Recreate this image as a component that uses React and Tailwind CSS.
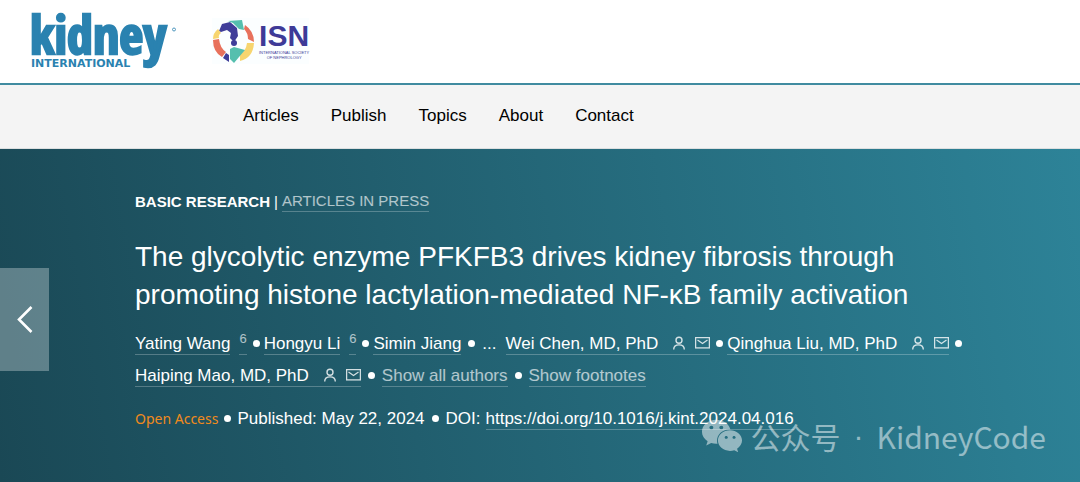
import { FaWeixin } from "react-icons/fa";

const navItems = ["Articles", "Publish", "Topics", "About", "Contact"];

function KidneyLogo() {
  return (
    <a href="#home" aria-label="Kidney International" className="block w-[150px] text-[#2a82b0]">
      <svg viewBox="0 0 150 62" className="block h-[62px] w-[150px] overflow-visible" fill="currentColor">
        <text x="-2" y="43" fontFamily="'Open Sans Condensed', 'Noto Sans Condensed', 'Roboto Condensed', 'Liberation Sans', sans-serif" fontSize="52" fontWeight="700" stroke="currentColor" strokeWidth="2.4">
          kidney
        </text>
        <text x="-1" y="56" fontFamily="'DejaVu Sans', sans-serif" fontSize="11" fontWeight="700">
          INTERNATIONAL
        </text>
        <circle cx="142" cy="18.500" r="1.500" fill="none" stroke="currentColor" strokeWidth="0.8" />
      </svg>
    </a>
  );
}

function IsnLogo() {
  return (
    <a href="#isn" aria-label="International Society of Nephrology" className="flex items-center gap-[3px] bg-[#fbfeff] text-[#3d3a97]">
      <svg viewBox="0 0 44 46" className="h-[46px] w-[44px]">
        <path d="M7 13 L10 6 L18 4 L25 10 L26 18 L22 24 L18 20 L19 15 L15 12 L9 14Z" fill="#3f3d99" />
        <path d="M16 3 L30 2 L32 12 L27 11 L21 5Z" fill="#55bfae" />
        <path d="M33 7 Q42 13 42 24 L36 21 Q36 15 32 11Z" fill="#e8715c" />
        <path d="M42 25 Q41 40 28 43 L28 36 Q34 33 35 25Z" fill="#f7d56f" />
        <path d="M18 31 L22 29 L33 32 L27 39 L22 45 L18 41Z" fill="#55bfae" />
        <path d="M6 11 L9 15 Q6 17 7 20 L1 21 Q1 15 6 11Z" fill="#f7d56f" />
        <path d="M1 22 L7 21 Q8 30 14 34 L10 39 Q1 34 1 22Z" fill="#e8715c" />
        <path d="M11 40 L14 35 L17 37 L17 44Z" fill="#3f3d99" />
        <circle cx="22" cy="25" r="3" fill="#3f3d99" />
      </svg>
      <span className="flex flex-col items-center">
        <span className="font-['Liberation_Sans'] text-[30px] leading-[28px] font-bold">ISN</span>
        <span className="text-center font-['Liberation_Sans'] text-[4px] leading-[5px]">
          INTERNATIONAL SOCIETY
          <br />
          OF NEPHROLOGY
        </span>
      </span>
    </a>
  );
}

function Dot({ className = "" }) {
  return <span className={"h-[7px] w-[7px] shrink-0 rounded-full bg-white " + className} />;
}

function PersonIcon() {
  return (
    <svg viewBox="0 0 14 14" className="h-[14px] w-[14px]" fill="none" stroke="currentColor" strokeWidth="1.400">
      <circle cx="7" cy="4.200" r="3" />
      <path d="M1.700 13.500 C1.700 10.200 4 8.900 7 8.900 S12.300 10.200 12.300 13.500" />
    </svg>
  );
}

function MailIcon() {
  return (
    <svg viewBox="0 0 15 12" className="h-[12px] w-[15px]" fill="none" stroke="currentColor" strokeWidth="1.300">
      <rect x="0.600" y="0.600" width="13.800" height="10.300" />
      <path d="M2.500 3 L7.500 6.500 L12.500 3" />
    </svg>
  );
}

const linkBase = "flex h-[23px] items-center border-b border-white/25 whitespace-nowrap ";

function Author({ name, note, contact = false }) {
  return (
    <>
      <a href="#author" className={linkBase}>
        {name}
        {contact && (
          <span className="ml-[14px] flex items-center gap-[9px] text-white/80">
            <PersonIcon />
            <MailIcon />
          </span>
        )}
      </a>
      {note && (
        <a href="#note" className={linkBase + "ml-[9px] pb-[10px] text-[13px] text-white/65"}>
          {note}
        </a>
      )}
    </>
  );
}

export default function App() {
  return (
    <div className="relative flex min-h-screen flex-col bg-white font-['Liberation_Sans',Arial,sans-serif] text-[17px]">
      <header className="flex h-[85px] items-start gap-[30px] border-b-2 border-[#408ba0] pt-[11px] pl-8">
        <KidneyLogo />
        <div className="pt-[7px]">
          <IsnLogo />
        </div>
      </header>
      <nav className="flex h-16 items-center gap-8 border-b border-[#dcdfe0] bg-[#f4f4f4] pb-px pl-[243px] text-black">
        {navItems.map((item) => (
          <a key={item} href={"#" + item.toLowerCase()}>
            {item}
          </a>
        ))}
      </nav>
      <main className="flex-1 bg-linear-[80deg,#1a4855,#2d8398] pr-20 pb-12 pl-[135px] text-white">
        <div className="flex items-center gap-1 pt-[42px] text-[15px] leading-[21px]">
          <strong>BASIC RESEARCH</strong>
          <span>|</span>
          <a href="#press" className="border-b border-white/25 leading-5 text-white/65">
            ARTICLES IN PRESS
          </a>
        </div>
        <h1 className="mt-[26px] max-w-[800px] text-[28px] leading-[38px]">
          The glycolytic enzyme PFKFB3 drives kidney fibrosis through promoting histone
          lactylation-mediated NF-κB family activation
        </h1>
        <div className="mt-[18px] flex flex-wrap items-center gap-y-[9px] leading-[23px]">
          <Author name="Yating Wang" note="6" />
          <Dot className="mr-1 ml-[6px]" />
          <Author name="Hongyu Li" note="6" />
          <Dot className="mr-1 ml-[6px]" />
          <Author name="Simin Jiang" />
          <Dot className="mx-[7px]" />
          <button type="button" aria-label="More authors" className="mr-[9px]">...</button>
          <Author name="Wei Chen, MD, PhD" contact />
          <Dot className="mr-1 ml-[6px]" />
          <Author name="Qinghua Liu, MD, PhD" contact />
          <Dot className="mx-[6px]" />
          <Author name="Haiping Mao, MD, PhD" contact />
          <Dot className="mx-[7px]" />
          <a href="#authors" className={linkBase + "text-white/65"}>Show all authors</a>
          <Dot className="mx-[7px]" />
          <a href="#footnotes" className={linkBase + "text-white/65"}>Show footnotes</a>
        </div>
        <div className="mt-5 flex flex-wrap items-center leading-[23px]">
          <span className="font-['Noto_Sans'] text-[14px] text-[#f08a1c]">Open Access</span>
          <Dot className="mx-[6px]" />
          <span>Published: May 22, 2024</span>
          <Dot className="mx-[7px]" />
          <span className="mr-[5px]">DOI:</span>
          <a href="https://doi.org/10.1016/j.kint.2024.04.016" className={linkBase}>
            https://doi.org/10.1016/j.kint.2024.04.016
          </a>
        </div>
      </main>
      <button type="button" aria-label="Previous article" className="absolute top-[268px] left-0 flex h-[103px] w-[49px] items-center justify-center bg-white/30 text-white">
        <svg viewBox="0 0 16 27" className="h-[27px] w-4" fill="none" stroke="currentColor" strokeWidth="2.600">
          <path d="M14.500 1 L2 13.500 L14.500 26" />
        </svg>
      </button>
      <div className="absolute right-[34px] bottom-6 flex items-center font-['Noto_Sans_CJK_SC',sans-serif] text-[30px] leading-[44px] text-white/50">
        <FaWeixin className="mr-2 h-[42px] w-[42px]" />
        <span>公众号</span>
        <span className="mx-[13px] font-['Liberation_Sans']">·</span>
        <span>KidneyCode</span>
      </div>
    </div>
  );
}
